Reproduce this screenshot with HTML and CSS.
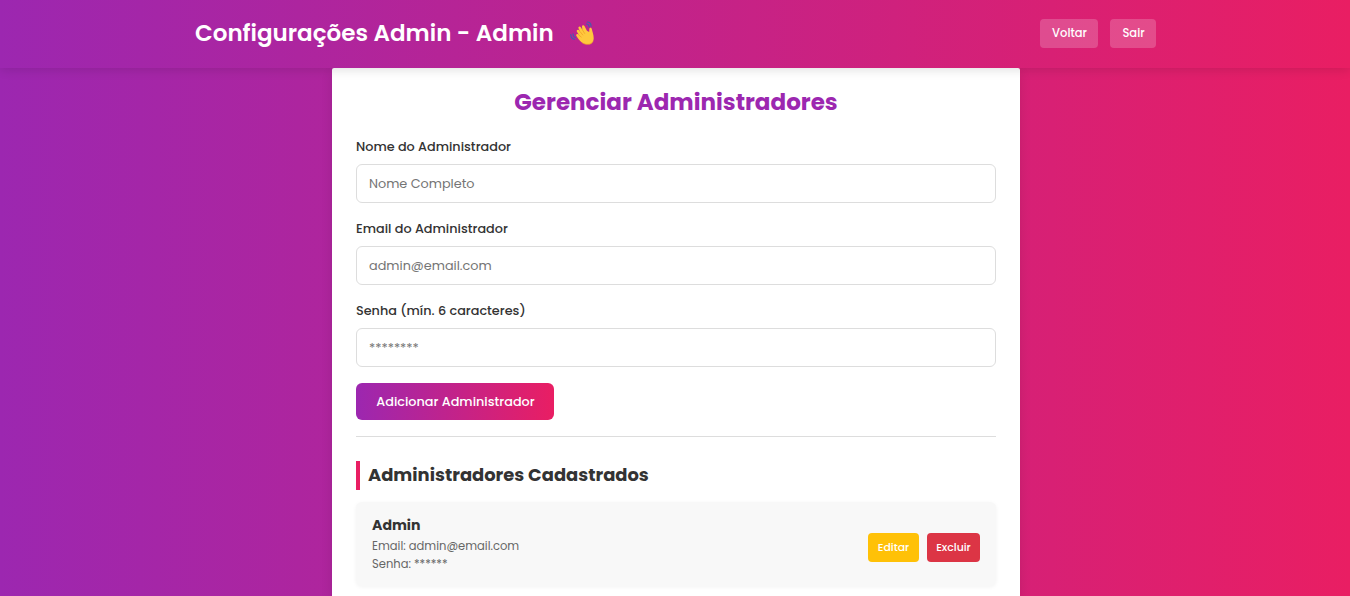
FILE: index.html
```html
<!DOCTYPE html>
<html lang="pt-BR">
<head>
<meta charset="utf-8">
<title>Configurações Admin</title>
<link rel="stylesheet" href="styles.css">
</head>
<body>
<header class="topbar">
  <div class="topbar-inner">
    <h1 class="brand"><span class="brand-text">Configurações Admin - Admin</span>
      <svg class="wave" viewBox="0 0 26 26" aria-hidden="true">
        <path d="M11.500 22.300C9.500 20.500 7.200 17.500 6.300 15.800C5.700 14.400 7.300 13.500 8.300 14.500L9.300 15.400L6.900 11.700C6.100 10.200 7.900 9.100 8.900 10.300L10 11.600L8.500 8.300C7.900 6.600 9.900 5.700 10.800 7.200L12.500 10L12 6.900C11.800 5.100 13.900 4.700 14.600 6.300L16.900 10.800L19.200 12L19.300 9.100C19.400 7.500 21.400 7.400 21.800 9.100C22.300 11.700 23.700 14.500 23.700 18.200C23.700 21.200 21.800 24.200 18.700 24.300C15.700 24.500 13.100 23.700 11.500 22.300Z" fill="#ffc83d"/>
        <path d="M9.300 15.400L11.200 17M10 11.600L12.800 15M12.500 10L14.700 13.500M12.500 23C14.300 24.100 16.500 24.500 18.700 24.300C20.500 24.200 22 23.200 22.900 21.700" fill="none" stroke="#f09a25" stroke-width=".7" stroke-linecap="round"/>
        <path d="M16.300 4C18 4 19 5 19.200 6.900M17.200 2C19.800 2.100 21.100 3.600 21.100 6.300M.8 14.500C.8 17.200 2.200 19 4.400 19.400M3 13.700C3 15.900 3.800 17 5.400 17.500" fill="none" stroke="#3f5fae" stroke-width="1.100" stroke-linecap="round"/>
      </svg>
    </h1>
    <nav class="nav"><button class="nav-btn voltar">Voltar</button><button class="nav-btn sair">Sair</button></nav>
  </div>
</header>
<main class="panel">
  <h2 class="title">Gerenciar Administradores</h2>
  <form class="form">
    <label class="label" for="nome">Nome do Administrador</label>
    <input class="input" id="nome" type="text" placeholder="Nome Completo">
    <label class="label" for="email">Email do Administrador</label>
    <input class="input" id="email" type="email" placeholder="admin@email.com">
    <label class="label" for="senha">Senha (mín. 6 caracteres)</label>
    <input class="input" id="senha" type="password" placeholder="********">
    <button class="submit" type="button">Adicionar Administrador</button>
  </form>
  <section class="list">
    <h3 class="subtitle">Administradores Cadastrados</h3>
    <article class="card">
      <div class="info">
        <strong class="name">Admin</strong>
        <span class="meta">Email: admin@email.com</span>
        <span class="meta">Senha: ******</span>
      </div>
      <div class="actions"><button class="action edit">Editar</button><button class="action delete">Excluir</button></div>
    </article>
  </section>
</main>
</body>
</html>
```
FILE: styles.css
```css
* { box-sizing: border-box; margin: 0; padding: 0; }
html { height: 100%; overflow: hidden; }
body {
  height: 100%;
  overflow: hidden;
  background: linear-gradient(90deg, #9c27b0, #e91e63);
  color: #333;
  font-family: Poppins, Inter, "Open Sans", sans-serif;
}
button, input { font: inherit; border: 0; white-space: nowrap; }
.topbar {
  position: relative;
  z-index: 1;
  height: 68px;
  background: linear-gradient(90deg, #9c27b0, #e91e63);
  box-shadow: 0 2px 10px rgba(0, 0, 0, .12);
}
.topbar-inner { width: 962px; height: 67px; margin: 0 0 0 195px; padding-right: 1px; display: flex; align-items: center; justify-content: space-between; }
.brand { display: flex; align-items: center; gap: 16px; color: #fff; font-size: 23.04px; font-weight: 600; line-height: 36px; white-space: nowrap; }
.brand-text { margin-top: -1px; }
.wave { width: 26px; height: 26px; margin-top: -1px; }
.nav { display: flex; gap: 12px; }
.nav-btn { height: 29px; padding-left: 1px; border-radius: 4px; background: rgba(255, 255, 255, .2); color: #fff; font-size: 11.52px; font-weight: 500; }
.voltar { width: 58px; }
.sair { width: 46px; }
.panel { width: 688px; height: 528px; margin: 0 0 0 332px; padding: 16px 24px 0; background: #fff; border-radius: 2px 2px 0 0; box-shadow: 0 4px 12px rgba(0, 0, 0, .1); }
.title { height: 36px; line-height: 36px; text-align: center; color: #9c27b0; font-size: 23.04px; font-weight: 700; }
.form { display: flex; flex-direction: column; align-items: flex-start; height: 317px; padding-top: 16px; border-bottom: 1px solid #ddd; }
.label { height: 20px; margin-bottom: 8px; line-height: 21px; font-size: 12.8px; font-weight: 500; }
.input { width: 640px; height: 39px; margin-bottom: 15px; padding: 0 12px; border: 1px solid #ddd; border-radius: 6px; background: #fff; font-size: 12.8px; }
.input::placeholder { color: #757575; opacity: 1; }
.submit { width: 198px; height: 37px; margin-top: 1px; padding-left: 1px; border-radius: 6px; background: linear-gradient(90deg, #9c27b0, #e91e63); color: #fff; font-size: 12.8px; font-weight: 500; }
.list { padding-top: 24px; }
.subtitle { height: 29px; padding-left: 8px; border-left: 4px solid #e91e63; line-height: 28px; font-size: 17.92px; font-weight: 700; }
.card { display: flex; align-items: center; justify-content: space-between; height: 84px; margin-top: 12px; padding: 7px 16px 0; border-radius: 6px; background: #f8f8f8; box-shadow: 0 1px 4px rgba(0, 0, 0, .05); }
.info { display: flex; flex-direction: column; align-items: flex-start; margin-top: -9px; }
.name { font-size: 14.08px; font-weight: 700; line-height: 24px; }
.meta { color: #666; font-size: 11.52px; line-height: 18px; }
.actions { display: flex; gap: 8px; }
.action { height: 29px; border-radius: 4px; color: #fff; font-size: 10.88px; font-weight: 500; }
.edit { width: 51px; background: #ffc107; }
.delete { width: 53px; background: #dc3545; }
```
